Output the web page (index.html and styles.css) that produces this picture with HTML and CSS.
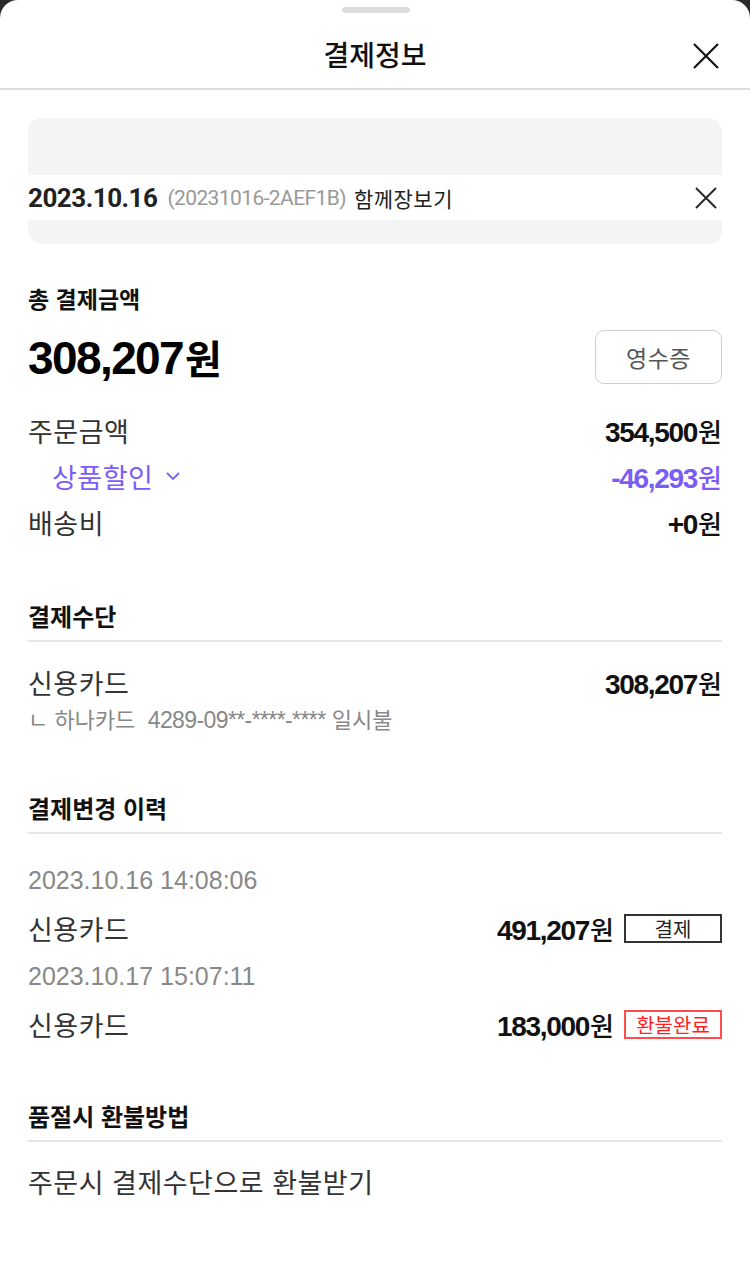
FILE: index.html
```html
<!DOCTYPE html>
<html lang="ko">
<head>
  <meta charset="UTF-8">
  <meta name="viewport" content="width=device-width, initial-scale=1.0">
  <title>결제정보</title>
  <link rel="stylesheet" href="styles.css">
</head>
<body>
  <div class="sheet">
    <div class="handle"></div>
    <header class="sheet-header">
      <h1>결제정보</h1>
      <button class="close-btn" aria-label="닫기">
        <svg width="26" height="26" viewBox="0 0 26 26"><path d="M1 1L25 25M25 1L1 25" stroke="#111" stroke-width="2.2" fill="none"/></svg>
      </button>
    </header>

    <div class="content">
      <div class="order-card">
        <div class="order-line">
          <span class="order-date">2023.10.16</span>
          <span class="order-no">(20231016-2AEF1B)</span>
          <span class="order-type">함께장보기</span>
          <svg class="order-x" width="22" height="22" viewBox="0 0 22 22"><path d="M1 1L21 21M21 1L1 21" stroke="#222" stroke-width="1.8" fill="none"/></svg>
        </div>
      </div>

      <section class="total">
        <h2 class="total-label">총 결제금액</h2>
        <div class="total-row">
          <span class="total-amount">308,207<span class="won">원</span></span>
          <button class="receipt-btn">영수증</button>
        </div>
      </section>

      <div class="amounts">
        <div class="line">
          <span class="line-label">주문금액</span>
          <span class="line-value">354,500<span class="won">원</span></span>
        </div>
        <div class="line discount">
          <span class="line-label">상품할인
            <svg width="16" height="10" viewBox="0 0 16 10"><path d="M2 2L8 8L14 2" stroke="#7c5cf6" stroke-width="1.8" fill="none"/></svg>
          </span>
          <span class="line-value">-46,293<span class="won">원</span></span>
        </div>
        <div class="line">
          <span class="line-label">배송비</span>
          <span class="line-value">+0<span class="won">원</span></span>
        </div>
      </div>

      <section class="section method">
        <h2 class="section-title">결제수단</h2>
        <div class="line">
          <span class="line-label">신용카드</span>
          <span class="line-value">308,207<span class="won">원</span></span>
        </div>
        <div class="card-info">ㄴ 하나카드&nbsp;&nbsp;<span class="card-no">4289-09**-****-****</span> 일시불</div>
      </section>

      <section class="section history">
        <h2 class="section-title">결제변경 이력</h2>
        <div class="history-list">
          <div class="history-date">2023.10.16 14:08:06</div>
          <div class="line history-line">
            <span class="line-label">신용카드</span>
            <span class="history-value"><span class="line-value">491,207<span class="won">원</span></span><span class="tag">결제</span></span>
          </div>
          <div class="history-date">2023.10.17 15:07:11</div>
          <div class="line history-line">
            <span class="line-label">신용카드</span>
            <span class="history-value"><span class="line-value">183,000<span class="won">원</span></span><span class="tag tag-refund">환불완료</span></span>
          </div>
        </div>
      </section>

      <section class="section refund">
        <h2 class="section-title">품절시 환불방법</h2>
        <p class="refund-text">주문시 결제수단으로 환불받기</p>
      </section>
    </div>
  </div>
</body>
</html>
```

FILE: styles.css
```css
body {
  margin: 0;
  background: #2b2b2b;
  font-family: "Noto Sans CJK KR", "Noto Sans", sans-serif;
  color: #222;
}

.sheet {
  background: #fff;
  border-radius: 18px 18px 0 0;
  height: 1276px;
  position: relative;
}

.handle {
  position: absolute;
  left: 342px;
  top: 7px;
  width: 68px;
  height: 6px;
  border-radius: 3px;
  background: #ddd;
}

.sheet-header {
  height: 68px;
  padding-top: 20px;
  border-bottom: 2px solid #d8dcdf;
  display: flex;
  align-items: center;
  justify-content: center;
  position: relative;
}

.sheet-header h1 {
  margin: 0;
  font-size: 28px;
  font-weight: 500;
  color: #111;
  line-height: 36px;
}

.close-btn {
  position: absolute;
  right: 31px;
  top: 43px;
  background: none;
  border: none;
  padding: 0;
  width: 26px;
  height: 26px;
}

.content {
  padding: 28px 28px 0;
}

/* order summary card */
.order-card {
  background: #f4f4f4;
  border-radius: 14px;
  height: 126px;
  display: flex;
  align-items: flex-start;
}

.order-line {
  background: #fff;
  height: 45px;
  width: 100%;
  display: flex;
  align-items: center;
  gap: 8px;
  margin-top: 57px;
}

.order-date {
  font-family: Roboto, sans-serif;
  font-weight: 700;
  font-size: 26px;
  color: #222;
  letter-spacing: -0.5px;
}

.order-no {
  font-family: Roboto, sans-serif;
  font-size: 21px;
  color: #999;
  margin-left: 2px;
  letter-spacing: -0.6px;
}

.order-type {
  font-size: 21px;
  color: #222;
  letter-spacing: 0.5px;
}

.order-x {
  margin-left: auto;
  margin-right: 5px;
}

/* total */
.total {
  margin-top: 38px;
}

.total-label {
  margin: 0;
  font-size: 23px;
  font-weight: 700;
  color: #111;
  line-height: 32px;
}

.total-row {
  display: flex;
  justify-content: space-between;
  align-items: center;
  margin-top: 16px;
  height: 54px;
}

.total-amount {
  font-family: "Liberation Sans", Arial, sans-serif;
  font-size: 46px;
  font-weight: 700;
  color: #000;
  letter-spacing: -1.6px;
}

.total-amount .won {
  font-family: "Noto Sans CJK KR", sans-serif;
  font-size: 40px;
  letter-spacing: 0;
  margin-left: 2px;
}

.receipt-btn {
  width: 127px;
  height: 54px;
  border: 1px solid #cfcfcf;
  border-radius: 9px;
  background: #fff;
  font-family: "Noto Sans CJK KR", sans-serif;
  font-size: 23px;
  color: #555;
  letter-spacing: 0.5px;
}

/* amount rows */
.amounts {
  margin-top: 23px;
}

.line {
  display: flex;
  justify-content: space-between;
  align-items: center;
  height: 46px;
}

.line-label {
  font-size: 27px;
  color: #333;
  letter-spacing: 0.5px;
}

.line-value {
  font-family: "Liberation Sans", Arial, sans-serif;
  font-size: 28px;
  font-weight: 700;
  color: #111;
  letter-spacing: -1.3px;
}

.line-value .won {
  font-family: "Noto Sans CJK KR", sans-serif;
  font-size: 26px;
  font-weight: 500;
  letter-spacing: 0;
  margin-left: 1px;
}

.discount .line-label {
  color: #7c5cf6;
  padding-left: 24px;
  display: flex;
  align-items: center;
  gap: 12px;
}

.discount .line-value {
  color: #7c5cf6;
}

/* sections */
.section-title {
  margin: 0 0 17px;
  font-size: 24px;
  font-weight: 700;
  color: #111;
  line-height: 32px;
  padding-bottom: 8px;
  border-bottom: 2px solid #e6e6e6;
}

.method {
  margin-top: 55px;
}

.history {
  margin-top: 57px;
}

.refund {
  margin-top: 52px;
}

.card-info {
  font-size: 22px;
  color: #888;
  line-height: 30px;
  margin-top: -2px;
}

.card-no {
  font-family: "Liberation Sans", Arial, sans-serif;
  font-size: 23px;
  letter-spacing: -0.6px;
}

.history-list {
  padding-top: 5px;
}

.history-date {
  font-family: "Liberation Sans", Arial, sans-serif;
  font-size: 25px;
  color: #888;
  height: 48px;
  line-height: 48px;
}

.history-line {
  height: 48px;
}

.history-value {
  display: flex;
  align-items: center;
  gap: 10px;
}

.tag {
  width: 94px;
  height: 25px;
  border: 2px solid #333;
  font-size: 20px;
  color: #222;
  display: flex;
  align-items: center;
  justify-content: center;
  box-sizing: content-box;
}

.tag-refund {
  border-color: #ff4d4d;
  color: #f22;
}

.refund-text {
  margin: 0;
  font-size: 27px;
  color: #333;
  line-height: 46px;
  letter-spacing: 0.5px;
}
```
